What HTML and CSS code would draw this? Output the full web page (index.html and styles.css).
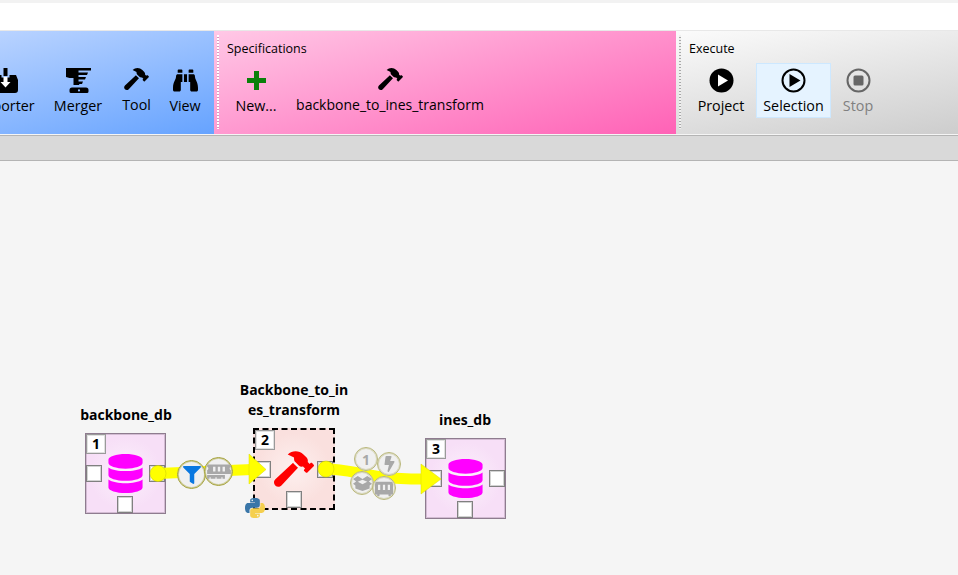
FILE: index.html
```html
<!DOCTYPE html>
<html lang="en">
<head>
    <meta charset="UTF-8">
    <title>Spine Toolbox</title>
    <link rel="stylesheet" href="styles.css">
</head>
<body>
    <svg class="defs" width="0" height="0">
        <symbol id="i-hammer" viewBox="0 0 576 512"><path d="M571.31 193.94l-22.63-22.63c-6.25-6.25-16.38-6.25-22.63 0l-11.31 11.31-28.9-28.9c5.63-21.31.36-44.9-16.35-61.61l-45.25-45.25c-62.48-62.48-163.79-62.48-226.28 0l90.51 45.25v18.75c0 16.97 6.74 33.25 18.75 45.25l49.14 49.14c16.71 16.71 40.3 21.98 61.61 16.35l28.9 28.9-11.31 11.31c-6.25 6.25-6.25 16.38 0 22.63l22.63 22.63c6.25 6.25 16.38 6.25 22.63 0l90.51-90.51c6.23-6.24 6.23-16.37-.02-22.62zm-286.72-15.2c-3.7-3.7-6.84-7.79-9.85-11.95L19.64 404.96c-25.57 23.88-26.26 64.19-1.53 88.93s65.05 24.05 88.93-1.53l238.13-255.07c-3.96-2.91-7.9-5.87-11.44-9.41l-49.14-49.14z"/></symbol>
        <symbol id="i-db" viewBox="0 0 448 512"><path d="M448 73.143v45.714C448 159.143 347.667 192 224 192S0 159.143 0 118.857V73.143C0 32.857 100.333 0 224 0s224 32.857 224 73.143zM448 176v102.857C448 319.143 347.667 352 224 352S0 319.143 0 278.857V176c48.125 33.143 136.208 48.572 224 48.572S399.874 209.143 448 176zm0 160v102.857C448 479.143 347.667 512 224 512S0 479.143 0 438.857V336c48.125 33.143 136.208 48.572 224 48.572S399.874 369.143 448 336z"/></symbol>
        <symbol id="i-python" viewBox="0 0 24 24">
            <path fill="#3a76a8" d="M11.9 0C5.8 0 6.2 2.6 6.2 2.6v2.7h5.8v.8H3.9S0 5.7 0 11.9s3.4 6 3.4 6h2v-2.9s-.1-3.4 3.4-3.4h5.8s3.2.1 3.2-3.1V3.2S18.3 0 11.9 0zM8.7 1.8c.6 0 1 .5 1 1s-.5 1-1 1-1-.5-1-1 .5-1 1-1z"/>
            <path fill="#f5cf4e" transform="rotate(180 12 12)" d="M11.9 0C5.8 0 6.2 2.6 6.2 2.6v2.7h5.8v.8H3.9S0 5.7 0 11.9s3.4 6 3.4 6h2v-2.9s-.1-3.4 3.4-3.4h5.8s3.2.1 3.2-3.1V3.2S18.3 0 11.9 0zM8.7 1.8c.6 0 1 .5 1 1s-.5 1-1 1-1-.5-1-1 .5-1 1-1z"/>
        </symbol>
    </svg>

    <div class="titlebar"></div>

    <div class="toolbar">
        <section class="group group-blue">
            <div class="tool tool-importer">
                <svg class="icon" viewBox="0 0 25 25"><path d="M10.5 0h4v8h-4z"/><path d="M2 7h6.5v2.500h8V7H23l2 5v10a3 3 0 0 1-3 3H3a3 3 0 0 1-3-3V12z"/><path fill="#fff" d="M10.5 9h4v5h3l-5 5.5-5-5.5h3z"/></svg>
                <span>Importer</span>
            </div>
            <div class="tool tool-merger">
                <svg class="icon" viewBox="0 0 25 25"><path d="M0 0h25v2.500H12.500v2H22l-1 2.500h-8.500v2H20l-1 2.500h-6.500v2H17l-1 2.500h-2.800v1H7.500v-7H3.500L0 9z"/><path fill-rule="evenodd" d="M6 19.500h14a2.500 2.500 0 0 1 2.500 2.500v1.500a1.500 1.500 0 0 1-1.500 1.500H5a1.500 1.500 0 0 1-1.500-1.500V22A2.500 2.500 0 0 1 6 19.500zm7 1.800a1 1 0 1 0 0 2.200 1 1 0 0 0 0-2.200z"/></svg>
                <span>Merger</span>
            </div>
            <div class="tool tool-tool short">
                <svg class="icon icon-hammer"><use href="#i-hammer"/></svg>
                <span>Tool</span>
            </div>
            <div class="tool tool-view">
                <svg class="icon" viewBox="0 0 512 512"><path d="M416 48c0-8.840-7.160-16-16-16h-64c-8.840 0-16 7.160-16 16v48h96V48zM63.910 159.990C61.400 253.840 3.460 274.220 0 404v44c0 17.670 14.330 32 32 32h96c17.670 0 32-14.330 32-32V288h32V128H95.840c-17.630 0-31.450 14.370-31.930 31.990zm384.180 0c-.48-17.620-14.300-31.990-31.930-31.990H320v160h32v160c0 17.670 14.330 32 32 32h96c17.670 0 32-14.330 32-32v-44c-3.460-129.780-61.400-150.160-63.910-244.010zM176 32h-64c-8.840 0-16 7.160-16 16v48h96V48c0-8.840-7.160-16-16-16zm48 256h64V128h-64v160z"/></svg>
                <span>View</span>
            </div>
        </section>

        <section class="group group-pink">
            <h4 class="group-title">Specifications</h4>
            <div class="tools tools-spec">
                <div class="tool tool-new">
                    <svg class="icon" viewBox="0 0 25 25"><path fill="#0a800a" d="M10 3h5v7h7v5h-7v7h-5v-7H3v-5h7z"/></svg>
                    <span>New...</span>
                </div>
                <div class="tool tool-spec short">
                    <svg class="icon icon-hammer"><use href="#i-hammer"/></svg>
                    <span>backbone_to_ines_transform</span>
                </div>
            </div>
        </section>

        <section class="group group-gray">
            <h4 class="group-title">Execute</h4>
            <div class="tools tools-exec">
                <div class="tool tool-project">
                    <svg class="icon" viewBox="0 0 25 25"><circle cx="12.5" cy="12.5" r="12"/><path fill="#fff" d="M9 6.500l10 6-10 6z"/></svg>
                    <span>Project</span>
                </div>
                <div class="tool tool-selection">
                    <svg class="icon" viewBox="0 0 25 25"><circle cx="12.5" cy="12.5" r="11" fill="none" stroke="#000" stroke-width="2"/><path d="M8.500 6l11 6.500-11 6.500z"/></svg>
                    <span>Selection</span>
                </div>
                <div class="tool tool-stop">
                    <svg class="icon" viewBox="0 0 25 25"><circle cx="12.5" cy="12.5" r="11" fill="none" stroke="#666" stroke-width="2"/><rect x="7.500" y="7.500" width="10" height="10" rx="1.500" fill="#666"/></svg>
                    <span>Stop</span>
                </div>
            </div>
        </section>
    </div>

    <div class="tabbar"></div>

    <div class="canvas">
        <div class="label label-1">backbone_db</div>
        <div class="label label-2">Backbone_to_in<br>es_transform</div>
        <div class="label label-3">ines_db</div>

        <div class="node node-db node-1">
            <span class="badge">1</span>
            <span class="port port-left"></span>
            <span class="port port-right"></span>
            <span class="port port-bottom"></span>
            <svg class="node-icon"><use href="#i-db"/></svg>
        </div>
        <div class="node node-tool">
            <span class="badge">2</span>
            <span class="port port-left"></span>
            <span class="port port-right"></span>
            <span class="port port-bottom"></span>
            <svg class="node-icon"><use href="#i-hammer"/></svg>
        </div>
        <div class="node node-db node-3">
            <span class="badge">3</span>
            <span class="port port-left"></span>
            <span class="port port-right"></span>
            <span class="port port-bottom"></span>
            <svg class="node-icon"><use href="#i-db"/></svg>
        </div>

        <svg class="python"><use href="#i-python"/></svg>

        <svg class="links" viewBox="0 161 958 414">
            <path class="link" d="M158 473.500L252 469.500"/>
            <path class="arrow" d="M249 454L266 469.500L249 484z"/>
            <circle class="link-start" cx="158" cy="473.500" r="8"/>
            <path class="link" d="M326 469C355 469 365 479 422 479"/>
            <path class="arrow" d="M421 464L441 479L421 494z"/>
            <circle class="link-start" cx="326" cy="469" r="8"/>
        </svg>

        <div class="chip chip-filter">
            <svg viewBox="0 0 512 512"><path d="M487.976 0H24.028C2.710 0-8.047 25.866 7.058 40.971L192 225.941V432c0 7.831 3.821 15.170 10.237 19.662l80 55.980C298.020 518.690 320 507.493 320 487.980V225.941l184.947-184.970C520.021 25.896 509.338 0 487.976 0z"/></svg>
        </div>
        <div class="chip chip-memory">
            <svg viewBox="0 0 640 512"><path d="M640 130.940V96c0-17.670-14.330-32-32-32H32C14.330 64 0 78.330 0 96v34.940c18.600 6.610 32 24.190 32 45.060s-13.400 38.450-32 45.060V320h640v-98.940c-18.600-6.610-32-24.190-32-45.060s13.400-38.450 32-45.060zM224 256h-64V128h64v128zm128 0h-64V128h64v128zm128 0h-64V128h64v128zM0 448h64v-26.670c0-8.840 7.160-16 16-16s16 7.160 16 16V448h128v-26.670c0-8.840 7.160-16 16-16s16 7.160 16 16V448h128v-26.670c0-8.840 7.160-16 16-16s16 7.160 16 16V448h64v-96H0v96z"/></svg>
        </div>
        <div class="chip chip-small chip-one">1</div>
        <div class="chip chip-small chip-bolt">
            <svg viewBox="0 0 320 512"><path d="M296 160H180.600l42.600-129.800C227.200 15 215.700 0 200 0H56C44 0 33.800 8.900 32.200 20.800l-32 240C-1.700 275.200 9.500 288 24 288h118.700L96.600 482.500c-3.600 15.200 8 29.500 23.300 29.500 8.400 0 16.400-4.400 20.800-12l176-304c9.300-15.900-2.200-36-20.700-36z"/></svg>
        </div>
        <div class="chip chip-small chip-box">
            <svg viewBox="0 0 24 20"><path d="M12 5L6 1 0 5l4 3-4 3 3 2v4l9 3 9-3v-4l3-2-4-3 4-3-6-4zM12 6l6 2.500-6 3-6-3z"/></svg>
        </div>
        <div class="chip chip-small chip-train">
            <svg viewBox="0 0 24 20"><path fill-rule="evenodd" d="M3 1h18a3 3 0 0 1 3 3v14h-3v2h-3v-2H6v2H3v-2H0V4a3 3 0 0 1 3-3zm1 4v7h3V5zm6.500 0v7h3V5zM17 5v7h3V5z"/></svg>
        </div>
    </div>
</body>
</html>
```

FILE: styles.css
```css
html, body {
    margin: 0;
    height: 100%;
}
body {
    display: flex;
    flex-direction: column;
    overflow: hidden;
    background-color: #f5f5f5;
    font-family: "Open Sans", "Noto Sans", sans-serif;
    color: #000;
}
.defs {
    position: absolute;
}

.titlebar {
    height: 27px;
    flex: none;
    background-color: #fff;
    border-top: 3px solid #f2f2f2;
}

/* toolbar */
.toolbar {
    display: flex;
    height: 104px;
    flex: none;
    border-top: 1px solid #e8e8e8;
    box-sizing: border-box;
}
.group {
    box-sizing: border-box;
    flex: none;
    position: relative;
    overflow: hidden;
}
.group-blue {
    display: flex;
    justify-content: flex-end;
    align-items: flex-start;
    gap: 8px;
    width: 214px;
    padding: 32px 9px 0 0;
    background: linear-gradient(165deg, #b9d3ff 0%, #66a3ff 100%);
}
.group-pink {
    width: 462px;
    padding: 9px 0 0 13px;
    background: linear-gradient(165deg, #ffc8e6 0%, #ff62b6 100%);
}
.group-gray {
    flex: 1;
    padding: 9px 0 0 13px;
    background: linear-gradient(170deg, #fbfbfb 0%, #cdcdcd 100%);
}
.group-pink::before,
.group-gray::before {
    content: "";
    position: absolute;
    left: 3px;
    top: 4px;
    bottom: 5px;
    width: 2px;
    background: repeating-linear-gradient(to bottom, #f0f0f0 0, #f0f0f0 2px, #a8a8a8 2px, #a8a8a8 3px);
}
.group-pink::before {
    background: repeating-linear-gradient(to bottom, #fff 0, #fff 2px, #d79ac0 2px, #d79ac0 3px);
}
.group-title {
    margin: 0 0 5px;
    font-size: 12.5px;
    font-weight: 400;
    line-height: 18px;
    height: 18px;
}
.tools {
    display: flex;
    align-items: flex-start;
    gap: 5px;
}
.tools-spec {
    margin-left: 4px;
}
.tools-exec {
    margin-left: 2px;
}
.tool {
    display: flex;
    flex-direction: column;
    align-items: center;
    flex: none;
    box-sizing: border-box;
    height: 55px;
    padding-top: 5px;
    font-size: 14.3px;
    line-height: 20px;
    white-space: nowrap;
}
.tool span {
    margin-top: 3px;
}
.icon {
    display: block;
    flex: none;
    width: 25px;
    height: 25px;
}
.icon-hammer {
    height: 22px;
    margin-bottom: 2px;
}
.short span {
    margin-top: 3px;
}
.tool-importer { width: 70px; }
.tool-merger { width: 60px; }
.tool-tool { width: 41px; }
.tool-view { width: 40px; }
.tool-new { width: 50px; }
.tool-spec {
    width: 202px;
    margin-left: 3px;
    font-size: 14px;
}
.tool-project { width: 60px; }
.tool-selection {
    width: 75px;
    background-color: #e5f3ff;
    border: 1px solid #cde8ff;
    padding-top: 4px;
}
.tool-stop {
    width: 44px;
    color: #808080;
}

.tabbar {
    height: 24px;
    flex: none;
    background-color: #d9d9d9;
    border-top: 1px solid #b4b4b4;
    border-bottom: 1px solid #b4b4b4;
    margin-top: 1px;
}

/* design canvas, items sit at their scene coordinates */
.canvas {
    position: relative;
    flex: 1;
    background-color: #f5f5f5;
}
.label {
    position: absolute;
    width: 140px;
    text-align: center;
    font-size: 14px;
    font-weight: 700;
    line-height: 20px;
}
.label-1 { left: 56px; top: 244px; }
.label-2 { left: 224px; top: 219px; }
.label-3 { left: 395px; top: 249px; }

.node {
    position: absolute;
    box-sizing: border-box;
    display: flex;
    align-items: center;
    justify-content: center;
}
.node-db {
    width: 81px;
    height: 81px;
    background: radial-gradient(circle, #fcf0fc 0%, #f7dff7 65%);
    border: 1px solid #8e7c8f;
    box-shadow: inset 0 0 0 1px rgba(142, 124, 143, 0.35);
}
.node-1 { left: 85px; top: 272px; }
.node-3 { left: 425px; top: 277px; }
.node-tool {
    left: 253px;
    top: 267px;
    width: 82px;
    height: 82px;
    background: radial-gradient(circle, #fdf0ef 0%, #fae0de 65%);
    border: 2px dashed #000;
}
.node-db .node-icon {
    width: 35px;
    height: 39px;
    fill: #f0f;
}
.node-tool .node-icon {
    width: 40px;
    height: 36px;
    fill: #f00;
}
.badge {
    position: absolute;
    left: 0;
    top: 0;
    box-sizing: border-box;
    width: 20px;
    height: 20px;
    background-color: #fff;
    border: 1px solid #9a9a9a;
    box-shadow: inset 0 0 0 1px rgba(154, 154, 154, 0.3);
    color: #000;
    font-size: 14px;
    font-weight: 700;
    line-height: 18px;
    text-align: center;
}
.port {
    position: absolute;
    box-sizing: border-box;
    width: 16px;
    height: 17px;
    background-color: #fff;
    border: 1px solid #808080;
    box-shadow: inset 0 0 0 1px rgba(128, 128, 128, 0.35);
}
.port-left { left: 0; top: 31px; }
.port-right { right: 0; top: 31px; }
.port-bottom { left: 31px; bottom: 0; }

.python {
    position: absolute;
    left: 245px;
    top: 336px;
    width: 20px;
    height: 22px;
}
.links {
    position: absolute;
    left: 0;
    top: 0;
    width: 958px;
    height: 414px;
}
.link {
    fill: none;
    stroke: #ff0;
    stroke-width: 11;
}
.arrow {
    fill: #ff0;
    stroke: #d8d800;
    stroke-width: 0.5;
}
.link-start {
    fill: #ff0;
    stroke: #c8c800;
    stroke-width: 0.5;
}

.chip {
    position: absolute;
    box-sizing: border-box;
    display: flex;
    align-items: center;
    justify-content: center;
    width: 29px;
    height: 29px;
    border-radius: 50%;
    background-color: #f0f0f0;
    border: 1px solid #a3a035;
    box-shadow: inset 0 0 0 1px rgba(163, 160, 53, 0.45);
}
.chip-small {
    width: 24px;
    height: 24px;
    border-color: #b9b77a;
    box-shadow: inset 0 0 0 1px rgba(185, 183, 122, 0.4);
}
.chip-filter { left: 177px; top: 299px; }
.chip-filter svg { width: 18px; height: 18px; fill: #0a78e0; }
.chip-memory { left: 204px; top: 296px; }
.chip-memory svg { width: 24px; height: 19px; fill: #a8a8a8; }
.chip-one {
    left: 354px;
    top: 286px;
    color: #a8a8a8;
    font-size: 14px;
    font-weight: 700;
}
.chip-bolt { left: 377px; top: 291px; }
.chip-bolt svg { width: 11px; height: 16px; fill: #a8a8a8; }
.chip-box { left: 350px; top: 310px; }
.chip-box svg { width: 19px; height: 16px; fill: #a8a8a8; }
.chip-train { left: 372px; top: 315px; }
.chip-train svg { width: 18px; height: 15px; fill: #a8a8a8; }
```
